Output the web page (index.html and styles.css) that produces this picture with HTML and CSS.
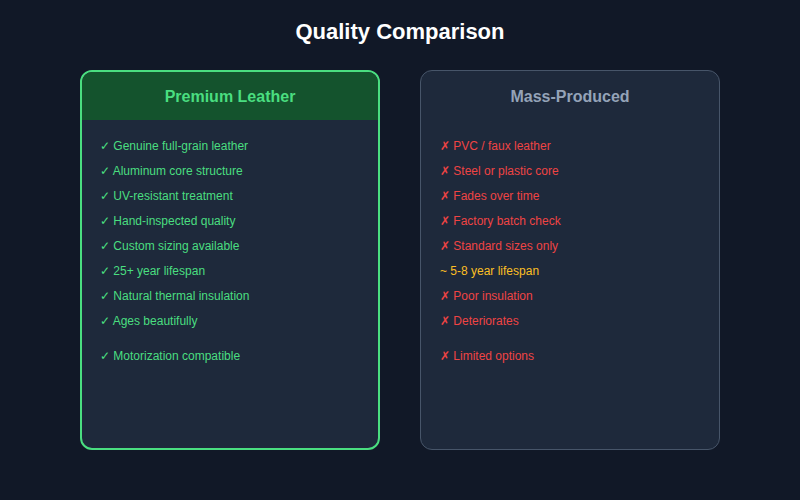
FILE: index.html
```html
<!DOCTYPE html>
<html>
<head>
<meta charset="utf-8">
<link rel="stylesheet" href="styles.css">
</head>
<body>
<h1 class="title">Quality Comparison</h1>
<div class="cards">
  <div class="card card-premium">
    <div class="card-head">Premium Leather</div>
    <ul class="list">
      <li class="good">✓ Genuine full-grain leather</li>
      <li class="good">✓ Aluminum core structure</li>
      <li class="good">✓ UV-resistant treatment</li>
      <li class="good">✓ Hand-inspected quality</li>
      <li class="good">✓ Custom sizing available</li>
      <li class="good">✓ 25+ year lifespan</li>
      <li class="good">✓ Natural thermal insulation</li>
      <li class="good">✓ Ages beautifully</li>
      <li class="good extra">✓ Motorization compatible</li>
    </ul>
  </div>
  <div class="card card-mass">
    <div class="card-head">Mass-Produced</div>
    <ul class="list">
      <li class="bad">✗ PVC / faux leather</li>
      <li class="bad">✗ Steel or plastic core</li>
      <li class="bad">✗ Fades over time</li>
      <li class="bad">✗ Factory batch check</li>
      <li class="bad">✗ Standard sizes only</li>
      <li class="warn">~ 5-8 year lifespan</li>
      <li class="bad">✗ Poor insulation</li>
      <li class="bad">✗ Deteriorates</li>
      <li class="bad extra">✗ Limited options</li>
    </ul>
  </div>
</div>
</body>
</html>
```
FILE: styles.css
```css
html, body {
  margin: 0;
  padding: 0;
}
body {
  width: 800px;
  height: 500px;
  background: #111827;
  font-family: "Liberation Sans", Arial, sans-serif;
  overflow: hidden;
}
.title {
  margin: 0;
  padding-top: 19px;
  height: 50px;
  box-sizing: border-box;
  text-align: center;
  color: #ffffff;
  font-size: 22px;
  line-height: 26px;
  font-weight: bold;
}
.cards {
  display: flex;
  justify-content: center;
  gap: 40px;
  margin-top: 20px;
}
.card {
  width: 300px;
  height: 380px;
  box-sizing: border-box;
  background: #1e293b;
  border-radius: 12px;
  overflow: hidden;
}
.card-premium {
  border: 2px solid #4ade80;
}
.card-mass {
  border: 1px solid #475569;
}
.card-head {
  text-align: center;
  font-weight: bold;
  font-size: 16px;
}
.card-premium .card-head {
  height: 48px;
  line-height: 50px;
  background: #14532d;
  color: #4ade80;
}
.card-mass .card-head {
  height: 49px;
  line-height: 52px;
  color: #94a3b8;
}
.list {
  list-style: none;
  margin: 0;
  padding: 14px 0 0 18px;
  font-size: 12px;
}
.card-mass .list {
  padding-left: 19px;
}
.list li {
  line-height: 25px;
  height: 25px;
}
.list li.extra {
  margin-top: 10px;
}
.good { color: #4ade80; }
.bad { color: #ef4444; }
.warn { color: #fbbf24; }
```
